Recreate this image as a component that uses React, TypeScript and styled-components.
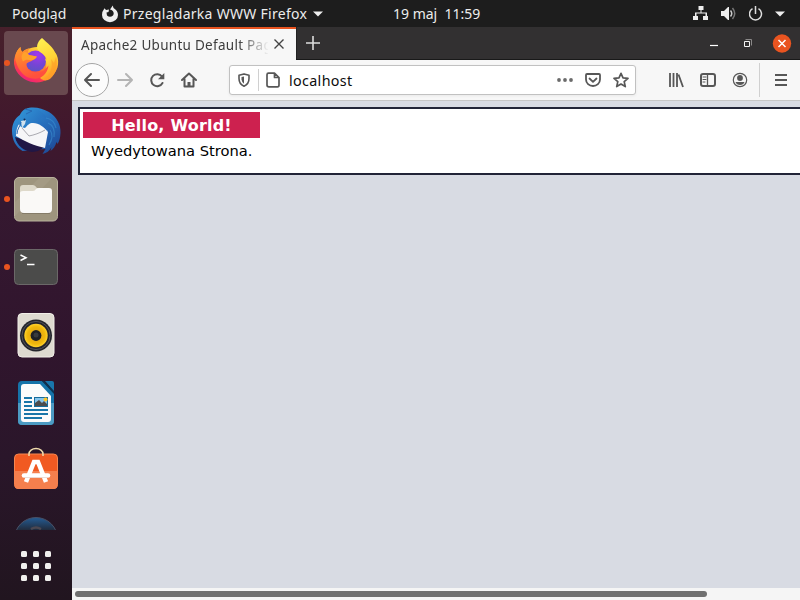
import React from "react";
import styled, { createGlobalStyle } from "styled-components";

const GlobalStyle = createGlobalStyle`
  * { box-sizing: border-box; }
  html, body { margin: 0; padding: 0; overflow: hidden; }
  svg { display: block; flex: none; }
`;

const Desktop = styled.div`
  width: 800px;
  height: 600px;
  display: flex;
  flex-direction: column;
  overflow: hidden;
  font-family: "Noto Sans", "Open Sans", sans-serif;
`;

const TopBar = styled.header`
  height: 27px;
  flex: none;
  display: grid;
  grid-template-columns: 393px 1fr auto;
  background: #1d1d1d;
  color: #ececec;
`;

const BarGroup = styled.div<{ $gap?: number; $left?: number; $right?: number }>`
  display: flex;
  align-items: center;
  gap: ${(p) => p.$gap ?? 0}px;
  padding-left: ${(p) => p.$left ?? 0}px;
  padding-right: ${(p) => p.$right ?? 0}px;
`;

const Label = styled.span<{ $width: number; $size?: number; $track?: number; $indent?: number }>`
  width: ${(p) => p.$width}px;
  flex: none;
  padding-left: ${(p) => p.$indent ?? 0}px;
  white-space: pre;
  font-size: ${(p) => p.$size ?? 14}px;
  letter-spacing: ${(p) => p.$track ?? 0}px;
  line-height: 26px;
`;

const Body = styled.div`
  flex: 1;
  min-height: 0;
  display: flex;
`;

const Dock = styled.nav`
  width: 72px;
  flex: none;
  display: flex;
  flex-direction: column;
  padding-top: 2px;
  background: linear-gradient(180deg, #47202b 0, #41182d 100px, #351830 180px, #30152d 320px, #2a162a 430px, #21151f 573px);
`;

const Slot = styled.div`
  height: 68px;
  flex: none;
  display: grid;
  grid-template-columns: 4px 64px;
  align-items: center;
`;

const RunningDot = styled.i<{ $on?: boolean }>`
  width: 6px;
  height: 6px;
  margin-left: 4px;
  border-radius: 50%;
  z-index: 1;
  background: ${(p) => (p.$on ? "#e95420" : "transparent")};
`;

const Tile = styled.div<{ $active?: boolean }>`
  width: 64px;
  height: 64px;
  border-radius: 4px;
  background: ${(p) => (p.$active ? "#69494f" : "transparent")};
`;

const ClippedSlot = styled.div`
  height: 25px;
  flex: none;
  overflow: hidden;
  padding: 12px 0 0 14px;
`;

const AppsGrid = styled.div`
  display: grid;
  grid-template-columns: repeat(3, 6px);
  grid-auto-rows: 6px;
  gap: 6px;
  padding: 21px 0 0 21px;
`;

const AppsDot = styled.i`
  background: #f1f0ee;
  border-radius: 1.5px;
`;

const Browser = styled.main`
  flex: 1;
  min-width: 0;
  display: flex;
  flex-direction: column;
`;

const TabBar = styled.div`
  height: 33px;
  flex: none;
  display: flex;
  background: #323031;
  border-bottom: 1px solid #191919;
`;

const Tab = styled.div`
  width: 224px;
  height: 33px;
  display: flex;
  align-items: center;
  padding-left: 9px;
  border-top: 2px solid #e95420;
  background: #f7f7f7;
  color: #3d3d3d;
`;

const TabTitle = styled.div`
  width: 187px;
  overflow: hidden;
  mask-image: linear-gradient(90deg, #000 158px, transparent 188px);
`;

const NewTab = styled.div`
  flex: 1;
  padding: 9px 0 0 9px;
  border-left: 1px solid #222;
`;

const WindowButtons = styled.div`
  display: flex;
  align-items: center;
  padding-top: 2px;
  padding-right: 8px;
`;

const Toolbar = styled.div`
  height: 41px;
  flex: none;
  display: flex;
  align-items: center;
  background: #f7f7f7;
  border-bottom: 1px solid #c6c6c6;
`;

const BackButton = styled.div`
  width: 34px;
  height: 34px;
  margin-left: 3px;
  display: grid;
  place-items: center;
  border: 1px solid #a5a5a5;
  border-radius: 50%;
  background: #fcfcfc;
`;

const NavIcons = styled.div`
  width: 120px;
  display: flex;
  gap: 16px;
  padding-left: 8px;
`;

const UrlBar = styled.div`
  width: 407px;
  height: 30px;
  display: flex;
  align-items: center;
  padding-left: 6px;
  border: 1px solid #c1c1c1;
  border-radius: 3px;
  background: #fff;
  box-shadow: 0 1px 3px rgba(0, 0, 0, 0.06);
  color: #0c0c0d;
`;

const UrlText = styled.span`
  flex: none;
  padding: 2px 0 0 8px;
  font-size: 14.3px;
  letter-spacing: 0.35px;
  line-height: 26px;
`;

const Divider = styled.i<{ $height: number; $margin: string }>`
  width: 1px;
  height: ${(p) => p.$height}px;
  margin: ${(p) => p.$margin};
  background: #d0d0d0;
`;

const UrlActions = styled.div`
  display: flex;
  gap: 12px;
  margin-left: auto;
  padding-right: 6px;
`;

const ToolIcons = styled.div`
  display: flex;
  gap: 16px;
  margin-left: 32px;
`;

const Page = styled.section`
  flex: 1;
  min-height: 0;
  overflow: hidden;
  padding: 6px 0 0 6px;
  background: #d8dbe3;
  color: #000;
  font-family: "DejaVu Sans", sans-serif;
`;

const PageBox = styled.article`
  width: 900px;
  height: 68px;
  padding: 3px;
  border: 2px solid #212437;
  background: #fff;
`;

const Heading = styled.h1`
  width: 177px;
  height: 26px;
  margin: 0;
  background: #cd214f;
  color: #fff;
  font-size: 16px;
  letter-spacing: 0.2px;
  line-height: 27px;
  text-align: center;
`;

const Paragraph = styled.p`
  margin: 0;
  padding-left: 8px;
  font-size: 14.7px;
  line-height: 25px;
`;

const ScrollTrack = styled.div`
  height: 12px;
  flex: none;
  padding: 3px;
  background: #f5f5f5;
`;

const ScrollThumb = styled.div`
  width: 632px;
  height: 6px;
  border-radius: 3px;
  background: #707070;
`;

const Icon = ({ children, size = 16 }: { children: React.ReactNode; size?: number }) => (
  <svg width={size} height={size} viewBox="0 0 16 16" fill="none" stroke="#575757" strokeWidth="2" strokeLinecap="round" strokeLinejoin="round">
    {children}
  </svg>
);

const FirefoxIcon = () => (
  <svg width="64" height="64" viewBox="0 0 64 64">
    <defs>
      <linearGradient id="ffBody" x1=".85" y1=".1" x2=".3" y2="1">
        <stop offset=".1" stopColor="#ffd83a" /><stop offset=".42" stopColor="#ff9329" /><stop offset=".7" stopColor="#ff4540" /><stop offset="1" stopColor="#ee1c80" />
      </linearGradient>
      <radialGradient id="ffGlobe" cx=".6" cy=".2" r=".85"><stop offset="0" stopColor="#a338ee" /><stop offset=".6" stopColor="#7545d4" /><stop offset="1" stopColor="#5b54c4" /></radialGradient>
      <linearGradient id="ffFlame" x1=".3" y1="0" x2=".6" y2="1"><stop offset="0" stopColor="#fff04f" /><stop offset=".55" stopColor="#ffd336" /><stop offset="1" stopColor="#ff9325" /></linearGradient>
      <linearGradient id="ffHead" x1="0" y1="0" x2=".4" y2="1"><stop stopColor="#ff9b2a" /><stop offset="1" stopColor="#ff503d" /></linearGradient>
    </defs>
    <path d="M11 25c1-4 3-7 5.500-9 0 2 .5 4 2 5 2-2 5-3.500 7-3.500 8-3 22-3 27 6 2 4 2 9 1 13A22.500 22 0 0 1 10 33q-.5-4 1-8z" fill="url(#ffBody)" />
    <circle cx="31.500" cy="30" r="10.500" fill="url(#ffGlobe)" />
    <path d="M38 7c5 5 12 9 14 17 3 8 1 18-6 24-3 2-7 2-10-1 6-5 8-13 5-19l2 1c-1-4-4-6-7-8-5-4-3-10 2-14z" fill="url(#ffFlame)" />
    <path d="M11 26c1-4 3-8 5.500-10 0 2 .5 4 2 5 2-2 5-3.500 7-3.500-2 2-2 5-1 6.500l8 1.500c-.5 2-3 3.500-6 5-2 1-4 1-4 3 0 5 5 8 10 8 7 0 9-4 12-7-1 9-8 14-16 13-10-1-16-11-17.500-21.500z" fill="url(#ffHead)" />
    <path d="M19 22c2-2 4-1 6 2l8 1.500c-.5 2-3 3-6 4-3-1-6-1-8 1-2-3-2-6 0-8.500z" fill="#ffa12b" />
    <path d="M52 26c3 11-3 20-12 22 7-5 9-12 7-20l3 4z" fill="#ff9e27" opacity=".65" />
  </svg>
);

const ThunderbirdIcon = () => (
  <svg width="64" height="64" viewBox="0 0 64 64">
    <defs>
      <linearGradient id="tb" x1=".1" y1="0" x2=".9" y2="1"><stop stopColor="#3198dd" /><stop offset=".6" stopColor="#2565b4" /><stop offset="1" stopColor="#1c4592" /></linearGradient>
      <linearGradient id="tbHead" x1="0" y1="0" x2="1" y2=".7"><stop stopColor="#3296d7" /><stop offset="1" stopColor="#2468ba" /></linearGradient>
    </defs>
    <path d="M22 10C28 7 38 9 45 13c8 5 12 13 11.500 21-.3 5-1 8-3 11l-1-2c-1 4-3 7-6 9l1-4c-2 4-5 6-9 7l3-5-23 2C12 48 8 41 8 32c0-7 3-13 8-16z" fill="url(#tb)" />
    <path d="M11 38l29 9c-1 3-7 6-12 6C20 52 13 47 11 38z" fill="#211746" />
    <path d="M16 24c5 0 12-4 17-2 5 2 9 6 11 11l-3 16C31 47 20 42 12 37c0-5 1-10 4-13z" fill="#f6f6f8" />
    <path d="M18 29l7 8c5-1 11-3 16-6" fill="none" stroke="#a0a0a8" strokeWidth=".9" />
    <path d="M15 25c-1-6 1-12 6-15l6-1c8 1 13 5 16 10-3-1-5-1-7 1 3 3 6 7 8 13-4-5-9-9-15-9-4 0-5 2-8 5l-4-1z" fill="url(#tbHead)" />
    <path d="M17 22l5-1-1 4-3 4z" fill="#d2e2ed" />
    <circle cx="20.500" cy="20.500" r="1" fill="#142c55" />
    <path d="M42 19c6 1 9 5 10 10M44 24c5 2 7 7 6 14M46 31c3 4 2 10-1 15" fill="none" stroke="#3d94d4" strokeWidth="1.200" opacity=".55" />
    <path d="M17 23c-1 5-4 7-4 12M21 10l7 2-6 3" fill="none" stroke="#2869b3" />
  </svg>
);

const FilesIcon = () => (
  <svg width="64" height="64" viewBox="0 0 64 64">
    <rect x="10.500" y="10.500" width="43" height="43.500" rx="4.500" fill="#9e957e" stroke="#b9b29d" />
    <path d="M11 35L35 11h13L11 49z" fill="#aaa28c" opacity=".5" />
    <path d="M16 29V21q0-3 3-3h10q2 0 4 3h12v8z" fill="#ded9ca" />
    <path d="M16 26q0-2 3-2h10q2 0 3-2 1-1 3-1h10q3 0 3 3v18q0 4-4 4H20q-4 0-4-4z" fill="#faf9f7" />
    <path d="M18 46.500h28" stroke="#756d5a" opacity=".6" />
  </svg>
);

const TerminalIcon = () => (
  <svg width="64" height="64" viewBox="0 0 64 64">
    <rect x="10.500" y="14.500" width="43" height="35" rx="4" fill="#4b4b4a" stroke="#6b6868" />
    <path d="M16.500 20l5.500 2.700-5.500 2.800M23 29.500h7.500" stroke="#fff" strokeWidth="1.500" fill="none" />
  </svg>
);

const RhythmboxIcon = () => (
  <svg width="64" height="64" viewBox="0 0 64 64">
    <defs><radialGradient id="cone"><stop offset=".3" stopColor="#e4a514" /><stop offset=".75" stopColor="#efb80c" /><stop offset="1" stopColor="#ffd12a" /></radialGradient></defs>
    <rect x="14" y="10.500" width="36" height="43.500" rx="4" fill="#dedad0" stroke="#f1eee8" />
    <circle cx="32" cy="32.500" r="16" fill="#24252b" /><circle cx="32" cy="32.500" r="14.100" fill="none" stroke="#51525c" />
    <circle cx="32" cy="32.500" r="11.700" fill="url(#cone)" /><circle cx="32" cy="32.500" r="5.400" fill="#202024" /><circle cx="32" cy="32" r="2.500" fill="#393a3e" />
  </svg>
);

const WriterIcon = () => (
  <svg width="64" height="64" viewBox="0 0 64 64">
    <path d="M18 10h20l12 12v28q0 4-4 4H18q-4 0-4-4V14q0-4 4-4z" fill="#1673a9" />
    <path d="M14 32h36v18q0 4-4 4H18q-4 0-4-4z" fill="#4c9bc3" />
    <path d="M20 13h16l11 12v23q0 3-3 3H20q-3 0-3-3V16q0-3 3-3z" fill="#fbfbfb" />
    <path d="M38 10l12 13v-3L40 10z" fill="#0b3453" /><path d="M41 10h7q2 0 2 2v8z" fill="#1976ac" />
    <path d="M20 27h8M20 31h8M20 35h8M20 39h24M20 43h24M20 47h18" stroke="#1976a9" strokeWidth="2" />
    <rect x="30.500" y="26.500" width="13" height="9" fill="#87c5eb" stroke="#176c9b" />
    <path d="M31 35v-3l4-3 3 3 2-2 3 3v2z" fill="#4c4c4c" /><circle cx="41.500" cy="28.500" r="2" fill="#ffc629" />
  </svg>
);

const SoftwareIcon = () => (
  <svg width="64" height="64" viewBox="0 0 64 64">
    <rect x="10.500" y="15" width="43" height="34.500" rx="4" fill="#f15a22" stroke="#f68650" />
    <path d="M10.500 32h43v14q0 4-4 4h-35q-4 0-4-4z" fill="#f57f4d" />
    <path d="M25 17v-2a7 5.500 0 0 1 14 0v2" stroke="#efdbac" strokeWidth="1.500" fill="none" />
    <path d="M22 43l8-20h4l8 20" stroke="#fff" strokeWidth="4.500" fill="none" />
    <path d="M20 36.500h24" stroke="#fff" strokeWidth="4.600" strokeLinecap="round" />
    <path d="M20 38.500h24" stroke="#e6d6cf" strokeWidth=".8" />
  </svg>
);

const dockItems = [
  { id: "firefox", icon: <FirefoxIcon />, running: true, active: true },
  { id: "thunderbird", icon: <ThunderbirdIcon /> },
  { id: "files", icon: <FilesIcon />, running: true },
  { id: "terminal", icon: <TerminalIcon />, running: true },
  { id: "rhythmbox", icon: <RhythmboxIcon /> },
  { id: "writer", icon: <WriterIcon /> },
  { id: "software", icon: <SoftwareIcon /> },
];

const SystemIcons = () => (
  <>
    <svg width="16" height="16" viewBox="0 0 16 16" fill="#eee"><path d="M5.500 0h5v4h-2v2.500H14V10h1v4h-5v-4h2.500V7.500h-9V10H5v4H0v-4h2V6.500h5.500V4h-2z" /></svg>
    <svg width="16" height="16" viewBox="0 0 16 16" fill="#eee"><path d="M0 5h3l4-4h1v13H7l-4-4H0z" /><path d="M9.500 4.500q2.500 3 0 6" fill="none" stroke="#ccc" strokeWidth="1.500" /><path d="M11.500 2q4.500 5.500 0 11" fill="none" stroke="#777" strokeWidth="1.500" /></svg>
    <svg width="14" height="16" viewBox="0 0 14 16" fill="none" stroke="#ddd" strokeWidth="1.500"><path d="M3.500 2.700a6 6 0 1 0 6 0M6.500 0v8" /></svg>
    <svg width="10" height="6" viewBox="0 0 10 6"><path d="M0 .5h10l-5 5z" fill="#eee" /></svg>
  </>
);

export default function App() {
  return (
    <Desktop>
      <GlobalStyle />
      <TopBar>
        <BarGroup $left={12}>
          <Label $width={90}>Podgląd</Label>
          <svg width="16" height="18" viewBox="0 0 16 18"><path d="M2.500 3.300L4 5l3-.5L6.500 7l-2 .5L5 10.500q3 2.500 6 0c1.500-2 .5-4.500-1.500-5.500L8 4.500 10.800.5 11.500 3q4.500 2.500 4.500 7a8 7.200 0 0 1-16 0q0-3.500 2.500-6.700z" fill="#eee" /></svg>
          <Label $width={195} $indent={5} $track={0.28}>Przeglądarka WWW Firefox</Label>
          <svg width="10" height="6" viewBox="0 0 10 6"><path d="M0 .5h10l-5 5z" fill="#eee" /></svg>
        </BarGroup>
        <BarGroup><Label $width={100}>19 maj  11:59</Label></BarGroup>
        <BarGroup $gap={12} $right={15}><SystemIcons /></BarGroup>
      </TopBar>
      <Body>
        <Dock>
          {dockItems.map((item) => (
            <Slot key={item.id}><RunningDot $on={item.running} /><Tile $active={item.active}>{item.icon}</Tile></Slot>
          ))}
          <ClippedSlot>
            <svg width="44" height="44" viewBox="0 0 44 44"><defs><linearGradient id="help" x1="0" y1="0" x2="0" y2="1"><stop stopColor="#245c94" /><stop offset=".35" stopColor="#20212b" /></linearGradient></defs><circle cx="22" cy="22" r="21.500" fill="url(#help)" stroke="#495066" /><path d="M17 12q5-3 10 0" stroke="#4b4852" strokeWidth="2.500" fill="none" /></svg>
          </ClippedSlot>
          <AppsGrid>{Array.from({ length: 9 }, (_, i) => <AppsDot key={i} />)}</AppsGrid>
        </Dock>
        <Browser>
          <TabBar>
            <Tab>
              <TabTitle><Label $width={187} $size={13.5} $track={0.28}>Apache2 Ubuntu Default Pag</Label></TabTitle>
              <svg width="20" height="20" viewBox="0 0 20 20" stroke="#444" strokeWidth="1.400"><path d="M6.500 4.500l9 9m0-9l-9 9" /></svg>
            </Tab>
            <NewTab><svg width="14" height="14" viewBox="0 0 14 14" stroke="#ddd" strokeWidth="1.600"><path d="M7 0v14M0 7h14" /></svg></NewTab>
            <WindowButtons>
              <svg width="92" height="20" viewBox="0 0 92 20" fill="none">
                <path d="M10 11.500h8" stroke="#fff" strokeWidth="1.200" />
                <path d="M45.500 5.500h6v6" stroke="#8b8989" /><path d="M44.500 7.500h5v5h-5z" stroke="#f3f3f3" />
                <circle cx="82" cy="9.500" r="9.200" fill="#e95420" /><path d="M78.500 6l7 7m0-7l-7 7" stroke="#fff" strokeWidth="1.500" />
              </svg>
            </WindowButtons>
          </TabBar>
          <Toolbar>
            <BackButton><Icon><path d="M1 8h14M7 2L1 8l6 6" /></Icon></BackButton>
            <NavIcons>
              <svg width="16" height="16" viewBox="0 0 16 16" fill="none" stroke="#b4b4b4" strokeWidth="2" strokeLinecap="round" strokeLinejoin="round"><path d="M1 8h14M9 2l6 6-6 6" /></svg>
              <Icon><path d="M13 4.500a6 6 0 1 0 .5 6.500" /><path d="M15.300 1v6.200H9z" fill="#575757" stroke="none" /></Icon>
              <Icon><path d="M1 8l7-6.500L15 8M3.500 7v7.500h9V7" /><path d="M6.500 15v-5h3v5z" fill="#575757" stroke="none" /></Icon>
            </NavIcons>
            <UrlBar>
              <Icon><path d="M8 1.900l5 1.300v3.300q0 5.500-5 7.700-5-2.200-5-7.700V3.200z" strokeWidth="1.600" /><path d="M8 4.500L5.500 5v2.500q.3 2.500 2.500 4.200z" fill="#575757" stroke="none" /></Icon>
              <Divider $height={22} $margin="0 6px" />
              <Icon><path d="M3.500 1.200H9.500L14 5.500V13q0 1.800-1.500 1.800h-8.500Q2 14.800 2 13V2.700q0-1.500 1.500-1.500zM9.500 1.200v4.300H14" strokeWidth="1.700" /></Icon>
              <UrlText>localhost</UrlText>
              <UrlActions>
                <Icon><g fill="#6b6b6b" stroke="none"><circle cx="2" cy="8" r="1.900" /><circle cx="8" cy="8" r="1.900" /><circle cx="14" cy="8" r="1.900" /></g></Icon>
                <Icon><path d="M2 2h12q1 0 1 1v4.500a7 6.500 0 0 1-14 0V3q0-1 1-1zM4.500 6.500L8 9.800l3.500-3.300" strokeWidth="1.800" /></Icon>
                <Icon><path d="M8 1.300l2 4.500 5 .5-3.800 3.300 1.100 5L8 12l-4.300 2.600 1.100-5L1 6.300l5-.5z" strokeWidth="1.700" /></Icon>
              </UrlActions>
            </UrlBar>
            <ToolIcons>
              <Icon><path d="M2 1v14M5.500 1v14M9 1v14M10.500 2.500L15 15" strokeLinecap="butt" strokeWidth="1.800" /></Icon>
              <Icon><rect x="1" y="2" width="14" height="12" rx="2" /><path d="M7.500 2v12" strokeWidth="1.300" /><path d="M3 5h3M3 7.500h3M3 10h2" strokeWidth="1" /></Icon>
              <Icon><circle cx="8" cy="8" r="6.700" strokeWidth="1.200" /><circle cx="8" cy="6" r="2.900" fill="#575757" stroke="none" /><path d="M3.500 10q2 0 4.500 0t4.500 0q-1 3-4.500 3t-4.500-3z" fill="#575757" stroke="none" /></Icon>
            </ToolIcons>
            <Divider $height={34} $margin="0 13px 0 11px" />
            <Icon><path d="M2 3h12M2 8h12M2 13h12" strokeLinecap="butt" strokeWidth="1.800" /></Icon>
          </Toolbar>
          <Page><PageBox><Heading>Hello, World!</Heading><Paragraph>Wyedytowana Strona.</Paragraph></PageBox></Page>
          <ScrollTrack><ScrollThumb /></ScrollTrack>
        </Browser>
      </Body>
    </Desktop>
  );
}
